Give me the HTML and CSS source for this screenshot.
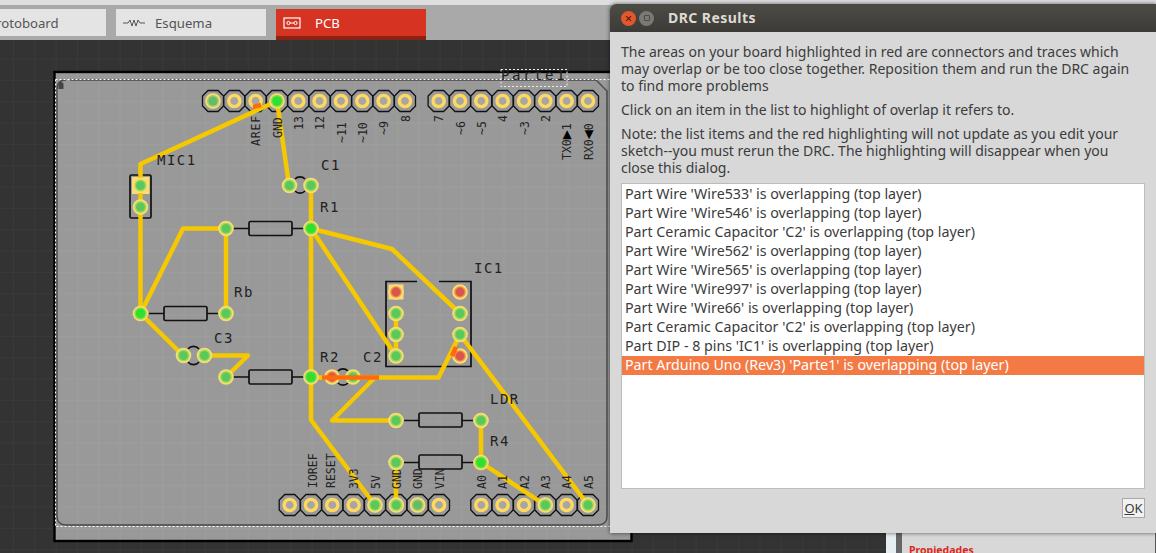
FILE: index.html
```html
<!DOCTYPE html>
<html lang="en">
<head>
<meta charset="utf-8">
<title>DRC Results</title>
<link rel="stylesheet" href="styles.css">
</head>
<body>
<div class="app">
  <header class="toolbar">
    <div class="tab tab-proto"><span class="tab-label">Protoboard</span></div>
    <div class="tab">
      <svg class="tab-icon" width="24" height="12" viewBox="0 0 24 12"><path d="M1 6H6L8 3L10 9L12 3L14 9L16 3L18 6H23" fill="none" stroke="#555" stroke-width="1"/></svg>
      <span class="tab-label">Esquema</span>
    </div>
    <div class="tab tab-active">
      <svg class="tab-icon" width="18" height="12" viewBox="0 0 18 12"><rect x="1" y="1" width="16" height="10" fill="none" stroke="#fff" stroke-width="1.2"/><circle cx="5.5" cy="6" r="1.6" fill="none" stroke="#fff"/><circle cx="12.5" cy="6" r="1.6" fill="none" stroke="#fff"/><path d="M7 6H11" stroke="#fff"/></svg>
      <span class="tab-label">PCB</span>
    </div>
  </header>
  <div class="workspace">
    <main class="canvas">
      <svg class="board" width="886" height="513" viewBox="0 40 886 513">
        <defs>
          <pattern id="grid" width="21.33" height="21.33" patternUnits="userSpaceOnUse" x="13" y="16">
            <path d="M0 0V21.33M0 0H21.33" fill="none" stroke="#3c3f42" stroke-width="1"/>
          </pattern>
          <pattern id="bgrid" width="21.33" height="21.33" patternUnits="userSpaceOnUse" x="13" y="16">
            <path d="M0 0V21.33M0 0H21.33" fill="none" stroke="#9fa1a1" stroke-width="1"/>
          </pattern>
          <path id="oct" d="M-5-10.5H5L10.5-5V5L5 10.5H-5L-10.5 5V-5Z" fill="#9a9a9a" stroke="#111" stroke-width="1.3"/>
          <g id="hole"><use href="#oct"/><circle r="5.6" fill="#a6a6a6" stroke="#ffd95f" stroke-width="3.4"/></g>
          <g id="pad"><circle r="7.8" fill="#fbdc72"/><circle r="6" fill="#9fdc5c"/><circle r="4.5" fill="#5cc85c"/></g>
          <g id="paddim"><circle r="7.8" fill="#fbdc72"/><circle r="6" fill="#a5cf6a"/><circle r="4.5" fill="#66bb66"/></g>
          <g id="padb"><circle r="7.8" fill="#fbdc72"/><circle r="6.2" fill="#8fe04a"/><circle r="4.8" fill="#30e030"/></g>
          <g id="padr"><circle r="7.8" fill="#fbdc72"/><circle r="5.8" fill="#ef8d4a"/><circle r="4.4" fill="#d9564a"/></g>
          <rect id="res" x="-21.5" y="-7" width="43" height="14" rx="1.5" fill="none" stroke="#111" stroke-width="1.7"/>
        </defs>
        <rect x="0" y="40" width="886" height="513" fill="#333"/>
        <rect x="0" y="40" width="886" height="513" fill="url(#grid)"/>
        <rect x="54.500" y="72" width="577" height="469" fill="#999" stroke="#000" stroke-width="2.4"/>
        <rect x="56" y="73" width="574" height="467" fill="url(#bgrid)"/>
        <path d="M70 80H596L607 91V516Q607 525 598 525H66Q57 525 57 516V89Q57 80 66 80" fill="none" stroke="#4a4a4a" stroke-width="1.4"/>
        <path d="M55.500 79.500H632M55.500 79.500V526.500H632" fill="none" stroke="#fff" stroke-width="1" stroke-dasharray="2 2"/>
        <path d="M58.500 89V84.500Q58.500 82 61 82T63.500 84.500V89Z" fill="#444"/>

        <g class="silk-lines">
          <rect x="130" y="175" width="21" height="43" rx="1.5"/>
          <path d="M439 281.500H471V366.500H386V281.500H417"/>
          <path d="M218 228.500H249M292 228.500H304M149 313.500H164M207 313.500H218M233 377H249M292 377H304M404 420.500H419M462 420.500H473M404 462.500H419M462 462.500H473"/>
          <path d="M295 179A7 7 0 0 1 305 179M295 191A7 7 0 0 0 305 191M188 349A7 7 0 0 1 199 349M188 362A7 7 0 0 0 199 362M338 371A7 7 0 0 1 348 371M338 383A7 7 0 0 0 348 383"/>
        </g>
        <use href="#res" x="270.500" y="228.500"/>
        <use href="#res" x="185.500" y="313.500"/>
        <use href="#res" x="270.500" y="377"/>
        <use href="#res" x="440.500" y="420"/>
        <use href="#res" x="440.500" y="462"/>

        <g class="holes">
          <use href="#hole" x="213" y="101"/><use href="#hole" x="234.300" y="101"/><use href="#hole" x="255.600" y="101"/><use href="#hole" x="277" y="101"/><use href="#hole" x="298.300" y="101"/><use href="#hole" x="319.600" y="101"/><use href="#hole" x="341" y="101"/><use href="#hole" x="362.300" y="101"/><use href="#hole" x="383.600" y="101"/><use href="#hole" x="405" y="101"/>
          <use href="#hole" x="438.600" y="101"/><use href="#hole" x="460" y="101"/><use href="#hole" x="481.300" y="101"/><use href="#hole" x="502.600" y="101"/><use href="#hole" x="524" y="101"/><use href="#hole" x="545.300" y="101"/><use href="#hole" x="566.600" y="101"/><use href="#hole" x="588" y="101"/>
          <use href="#hole" x="289.700" y="505"/><use href="#hole" x="311" y="505"/><use href="#hole" x="332.300" y="505"/><use href="#hole" x="353.600" y="505"/><use href="#hole" x="375" y="505"/><use href="#hole" x="396.300" y="505"/><use href="#hole" x="417.600" y="505"/><use href="#hole" x="439" y="505"/>
          <use href="#hole" x="481.300" y="505"/><use href="#hole" x="502.600" y="505"/><use href="#hole" x="524" y="505"/><use href="#hole" x="545.300" y="505"/><use href="#hole" x="566.600" y="505"/><use href="#hole" x="588" y="505"/>
        </g>
        <rect x="132" y="177" width="17.500" height="17" fill="#fbdc72"/>
        <rect x="388.500" y="284.500" width="15" height="15" fill="#fbdc72"/>

        <g class="traces">
          <path d="M277 101L140.500 164V313.500L183 355.500"/>
          <path d="M277 101L289 185"/>
          <path d="M311 185V420L375 505"/>
          <path d="M140.500 313.500L183 228.500H226V313.500"/>
          <path d="M204.500 355.500H248L226 377"/>
          <path d="M311 228.500L396 356V313.500"/>
          <path d="M311 228.500L392 249L460 313.500"/>
          <path d="M311 377.500H438.500L460 334.500L588 505"/>
          <path d="M375 377.500L332 420.500H396"/>
          <path d="M481 420.500V462.500L545 505"/>
          <path d="M396 462.500V505"/>
        </g>

        <g class="silk-small">
          <text class="wide" transform="translate(260 146) rotate(-90)">AREF</text>
          <text transform="translate(282 138) rotate(-90)">GND</text>
          <text transform="translate(303 130) rotate(-90)">13</text>
          <text transform="translate(324 130) rotate(-90)">12</text>
          <text transform="translate(346 143) rotate(-90)">~11</text>
          <text transform="translate(367 143) rotate(-90)">~10</text>
          <text transform="translate(388 135) rotate(-90)">~9</text>
          <text transform="translate(410 122) rotate(-90)">8</text>
          <text transform="translate(443 122) rotate(-90)">7</text>
          <text transform="translate(465 135) rotate(-90)">~6</text>
          <text transform="translate(486 135) rotate(-90)">~5</text>
          <text transform="translate(507 122) rotate(-90)">4</text>
          <text transform="translate(529 135) rotate(-90)">~3</text>
          <text transform="translate(550 122) rotate(-90)">2</text>
          <text transform="translate(571 160) rotate(-90)">TX0<tspan class="arrow">▶</tspan>1</text>
          <text transform="translate(593 160) rotate(-90)">RX0<tspan class="arrow">◀</tspan>0</text>
          <text transform="translate(317 488) rotate(-90)">IOREF</text>
          <text transform="translate(335 488) rotate(-90)">RESET</text>
          <text transform="translate(358 489) rotate(-90)">3V3</text>
          <text transform="translate(380 489) rotate(-90)">5V</text>
          <text transform="translate(401 489) rotate(-90)">GND</text>
          <text transform="translate(422 489) rotate(-90)">GND</text>
          <text transform="translate(444 489) rotate(-90)">VIN</text>
          <text transform="translate(486 489) rotate(-90)">A0</text>
          <text transform="translate(507 489) rotate(-90)">A1</text>
          <text transform="translate(529 489) rotate(-90)">A2</text>
          <text transform="translate(550 489) rotate(-90)">A3</text>
          <text transform="translate(571 489) rotate(-90)">A4</text>
          <text transform="translate(593 489) rotate(-90)">A5</text>
        </g>

        <use href="#paddim" x="213" y="101"/><use href="#padb" x="277" y="101"/>
        <use href="#pad" x="375" y="505"/><use href="#pad" x="396.300" y="505"/><use href="#paddim" x="417.600" y="505"/><use href="#pad" x="545.300" y="505"/><use href="#pad" x="588" y="505"/>
        <use href="#pad" x="140.500" y="185.500"/><use href="#pad" x="140.500" y="207"/>
        <use href="#pad" x="289.500" y="185.500"/><use href="#pad" x="311" y="185.500"/>
        <use href="#padb" x="311" y="228.500"/><use href="#pad" x="226" y="228.500"/>
        <use href="#padb" x="140.500" y="313.500"/><use href="#pad" x="226" y="313.500"/>
        <use href="#pad" x="183.500" y="355.500"/><use href="#pad" x="204.500" y="355.500"/>
        <use href="#pad" x="226" y="377"/><use href="#padb" x="311" y="377"/>
        <use href="#pad" x="396" y="313.500"/><use href="#pad" x="396" y="334.500"/><use href="#pad" x="396" y="356"/>
        <use href="#pad" x="460" y="313.500"/><use href="#pad" x="460" y="334.500"/>
        <use href="#padr" x="396" y="292"/><use href="#padr" x="460" y="292"/><use href="#padr" x="460" y="356"/>
        <use href="#pad" x="396" y="420.500"/><use href="#pad" x="481" y="420.500"/>
        <use href="#pad" x="396" y="462.500"/><use href="#padb" x="481" y="462.500"/>
        <use href="#padr" x="332" y="377"/><use href="#pad" x="353" y="377"/>

        <g class="drc">
          <path d="M322 377.500H379"/>
          <path d="M456 347L452 356"/>
          <path d="M253 107L261 105"/>
        </g>

        <g class="silk-big">
          <text x="157" y="165">MIC1</text>
          <text x="321" y="170">C1</text>
          <text x="320" y="212">R1</text>
          <text x="234" y="297">Rb</text>
          <text x="214" y="343">C3</text>
          <text x="320" y="362">R2</text>
          <text x="363" y="362">C2</text>
          <text x="474" y="273">IC1</text>
          <text x="490" y="404">LDR</text>
          <text x="490" y="446">R4</text>
          <text class="part-name" x="501" y="80">Parte1</text>
        </g>
        <rect x="501" y="69.500" width="66" height="17" class="label-sel"/>
      </svg>
    </main>
    <aside class="side">
      <div class="side-edge"></div>
      <div class="side-panel"><h2 class="side-title">Propiedades</h2></div>
      <div class="side-scroll"></div>
    </aside>
  </div>

  <section class="dialog">
    <div class="titlebar">
      <span class="win-btn win-close">×</span>
      <span class="win-btn win-min"><span class="win-min-dot"></span></span>
      <span class="win-title">DRC Results</span>
    </div>
    <div class="dialog-body">
      <p class="msg">The areas on your board highlighted in red are connectors and traces which may overlap or be too close together. Reposition them and run the DRC again to find more problems</p>
      <p class="msg">Click on an item in the list to highlight of overlap it refers to.</p>
      <p class="msg">Note: the list items and the red highlighting will not update as you edit your sketch--you must rerun the DRC. The highlighting will disappear when you close this dialog.</p>
      <ul class="list">
        <li>Part Wire 'Wire533' is overlapping (top layer)</li>
        <li>Part Wire 'Wire546' is overlapping (top layer)</li>
        <li>Part Ceramic Capacitor 'C2' is overlapping (top layer)</li>
        <li>Part Wire 'Wire562' is overlapping (top layer)</li>
        <li>Part Wire 'Wire565' is overlapping (top layer)</li>
        <li>Part Wire 'Wire997' is overlapping (top layer)</li>
        <li>Part Wire 'Wire66' is overlapping (top layer)</li>
        <li>Part Ceramic Capacitor 'C2' is overlapping (top layer)</li>
        <li>Part DIP - 8 pins 'IC1' is overlapping (top layer)</li>
        <li class="selected">Part Arduino Uno (Rev3) 'Parte1' is overlapping (top layer)</li>
      </ul>
      <div class="actions"><button class="ok"><u>O</u>K</button></div>
    </div>
  </section>
</div>
</body>
</html>
```

FILE: styles.css
```css
* { box-sizing: border-box; }
html, body { margin: 0; padding: 0; }
body { width: 1156px; height: 553px; overflow: hidden; font-family: "Noto Sans", sans-serif; }
.app { position: relative; width: 1156px; height: 553px; display: flex; flex-direction: column; overflow: hidden; }

.toolbar { height: 40px; flex: none; display: flex; gap: 10px; margin-left: -44px; background: #a9a9a9; border-top: 5px solid #dedede; align-items: flex-start; padding-top: 4px; width: 1200px; }
.tab { width: 150px; height: 27px; background: #e4e4e4; color: #555; display: flex; align-items: center; gap: 9px; padding-left: 6px; font-size: 13.2px; }
.tab-proto { padding-left: 32px; }
.tab-active { height: 31px; padding: 0 0 0 7px; gap: 14px; background: #d63322; color: #fff; border-bottom: 4px solid #8a2312; }
.tab-icon { flex: none; }

.workspace { flex: 1; display: flex; min-height: 0; }
.canvas { width: 886px; flex: none; }
.board { display: block; }
.side { flex: 1; display: flex; background: #d8d8d8; }
.side-edge { width: 16px; flex: none; background: #e6eef2; border-right: 6px solid #666; }
.side-panel { flex: 1; display: flex; align-items: flex-end; padding: 0 0 0 7px; }
.side-title { margin: 0 0 -3px; font-size: 10.5px; line-height: 12px; font-weight: 700; color: #d8281e; }
.side-scroll { width: 1px; background: #555; }

.silk-lines { fill: none; stroke: #111; stroke-width: 1.7; }
.traces { fill: none; stroke: #f5c800; stroke-width: 4.5; stroke-linejoin: round; stroke-linecap: round; }
.drc { fill: none; stroke: #ff6a0a; stroke-width: 4.5; }
.silk-big { font-family: "DejaVu Sans Mono", monospace; font-size: 14px; letter-spacing: 1.5px; fill: #222; }
.part-name { letter-spacing: 2.6px; }
.silk-small { font-family: "DejaVu Sans Mono", monospace; font-size: 11.5px; fill: #222; }
.silk-small .wide { letter-spacing: .8px; }
.silk-small .arrow { font-size: 15px; fill: #000; }
.label-sel { fill: none; stroke: #eee; stroke-width: 1; stroke-dasharray: 2 2; }

.dialog { position: absolute; left: 610px; top: 4px; width: 546px; height: 529px; display: flex; flex-direction: column; background: #d8d8d8; border-radius: 6px 0 0 0; box-shadow: 0 0 4px rgba(0, 0, 0, .6); }
.titlebar { height: 28px; flex: none; display: flex; align-items: center; padding-left: 11px; background: linear-gradient(#4c4b46, #3c3b37); border-radius: 6px 0 0 0; }
.win-btn { width: 15px; height: 15px; border-radius: 50%; display: flex; align-items: center; justify-content: center; font-size: 13px; line-height: 1; color: #4a1a08; }
.win-close { background: #e2572b; }
.win-min { margin-left: 3px; background: #7a7974; }
.win-min-dot { width: 6px; height: 6px; border: 1px solid #4a4a46; border-radius: 1px; }
.win-title { margin-left: 14px; padding-bottom: 2px; font-size: 14px; font-weight: 700; letter-spacing: .45px; color: #dfdbd2; }
.dialog-body { flex: 1; display: flex; flex-direction: column; padding: 11px 11px 15px; min-height: 0; }
.msg { margin: 0 0 7px; font-size: 14px; line-height: 17px; color: #3c3c3c; }
.list { list-style: none; margin: 0; padding: 1px 0 0; height: 306px; flex: none; background: #fff; border: 1px solid #bdbdb5; }
.list li { height: 19px; padding-left: 3px; font-size: 14.25px; line-height: 17px; color: #3c3c3c; white-space: nowrap; }
.list .selected { background: #f37a45; color: #fff; }
.actions { margin-top: 9px; display: flex; justify-content: flex-end; }
.ok { width: 23px; height: 20px; padding: 0; font-family: inherit; font-size: 13px; line-height: 18px; color: #3c3c3c; background: #f2f2f2; border: 1px solid #a9a9a9; }
```
